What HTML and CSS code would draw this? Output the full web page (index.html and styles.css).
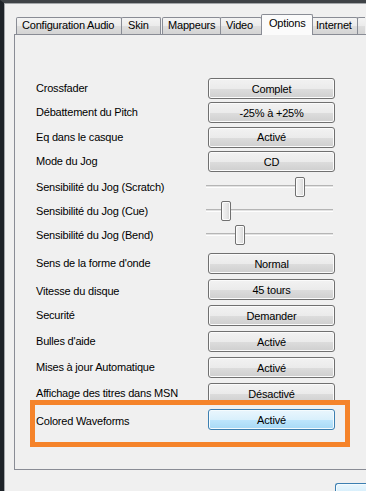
FILE: index.html
```html
<!DOCTYPE html>
<html lang="fr">
<head>
  <meta charset="UTF-8">
  <meta name="viewport" content="width=device-width, initial-scale=1.0">
  <title>Options</title>
  <link rel="stylesheet" href="styles.css">
</head>
<body>
  <div class="window">
    <div class="tabs">
      <div class="tab tab-config">Configuration Audio</div>
      <div class="tab tab-skin">Skin</div>
      <div class="tab tab-mappeurs">Mappeurs</div>
      <div class="tab tab-video">Video</div>
      <div class="tab tab-options selected">Options</div>
      <div class="tab tab-internet">Internet</div>
      <div class="tab tab-more"></div>
    </div>

    <div class="panel">
      <div class="group group-a">
        <div class="row"><span class="label">Crossfader</span><button class="btn">Complet</button></div>
        <div class="row"><span class="label">Débattement du Pitch</span><button class="btn">-25% à +25%</button></div>
        <div class="row"><span class="label">Eq dans le casque</span><button class="btn">Activé</button></div>
        <div class="row"><span class="label">Mode du Jog</span><button class="btn">CD</button></div>
      </div>

      <div class="group group-b">
        <div class="row slider-row">
          <span class="label">Sensibilité du Jog (Scratch)</span>
          <div class="slider"><div class="track"></div><div class="thumb" style="left: 89px"></div></div>
        </div>
        <div class="row slider-row">
          <span class="label">Sensibilité du Jog (Cue)</span>
          <div class="slider"><div class="track"></div><div class="thumb" style="left: 15px"></div></div>
        </div>
        <div class="row slider-row">
          <span class="label">Sensibilité du Jog (Bend)</span>
          <div class="slider"><div class="track"></div><div class="thumb" style="left: 29px"></div></div>
        </div>
      </div>

      <div class="group group-c">
        <div class="row"><span class="label">Sens de la forme d'onde</span><button class="btn">Normal</button></div>
        <div class="row"><span class="label low">Vitesse du disque</span><button class="btn">45 tours</button></div>
        <div class="row"><span class="label">Securité</span><button class="btn">Demander</button></div>
        <div class="row"><span class="label">Bulles d'aide</span><button class="btn">Activé</button></div>
        <div class="row"><span class="label">Mises à jour Automatique</span><button class="btn">Activé</button></div>
        <div class="row"><span class="label">Affichage des titres dans MSN</span><button class="btn">Désactivé</button></div>
        <div class="row"><span class="label low">Colored Waveforms</span><button class="btn hot">Activé</button></div>
      </div>

      <div class="highlight"></div>
    </div>

    <div class="footer">
      <div class="ok"></div>
    </div>
  </div>
</body>
</html>
```

FILE: styles.css
```css
html, body {
  margin: 0;
  padding: 0;
  height: 100%;
  overflow: hidden;
}
body {
  background-color: #f0f0f0;
  font-family: "Liberation Sans", Arial, sans-serif;
  font-size: 11px;
  letter-spacing: -0.2px;
  color: #000;
}
.window {
  height: 100%;
  box-sizing: border-box;
  border-top: 3px solid #3f4347;
  border-left: 4px solid #1e2328;
  box-shadow: inset 1px 1px 0 #a4a7aa;
  padding-top: 11px;
}

/* tabs */
.tabs {
  display: flex;
  align-items: flex-end;
  height: 21px;
  margin-left: 12px;
  margin-bottom: -1px;
  position: relative;
  z-index: 1;
  overflow: hidden;
}
.tab {
  flex-shrink: 0;
  box-sizing: border-box;
  height: 17px;
  margin-bottom: 1px;
  margin-left: -1px;
  padding-left: 6px;
  border: 1px solid #898c95;
  border-bottom: none;
  border-radius: 2px 2px 0 0;
  background: linear-gradient(#f4f4f4, #ebebeb 50%, #dedede 51%, #d4d4d4);
  line-height: 15px;
  white-space: nowrap;
  overflow: hidden;
}
.tab:first-child {
  margin-left: 0;
}
.tab-config { width: 106px; padding-left: 5px; }
.tab-skin { width: 40px; }
.tab-mappeurs { width: 59px; margin-left: 1px; padding-left: 5px; }
.tab-video { width: 42px; padding-left: 5px; }
.tab-options { width: 52px; }
.tab-internet { width: 47px; padding-left: 4px; }
.tab-more { width: 8px; border-right: none; border-radius: 2px 0 0 0; }
.tab.selected {
  height: 21px;
  margin-bottom: 0;
  margin-left: -1px;
  margin-right: -1px;
  position: relative;
  z-index: 2;
  padding-left: 7px;
  background: #fbfbfb;
  line-height: 17px;
}

/* panel */
.panel {
  position: relative;
  height: 436px;
  box-sizing: border-box;
  margin-left: 10px;
  border: 1px solid #898c95;
  border-right: none;
  background-color: #f0f0f0;
  padding: 43px 0 0 21px;
}
.group {
  display: flex;
  flex-direction: column;
}
.group-a {
  gap: 3.4px;
}
.group-b {
  gap: 4px;
  margin-top: 5px;
}
.group-c {
  gap: 5px;
  margin-top: 8px;
}
.row {
  display: flex;
  align-items: center;
  height: 21px;
}
.slider-row {
  height: 20px;
}
.label {
  width: 172px;
  flex-shrink: 0;
  white-space: nowrap;
  padding-bottom: 1px;
}
.label.low {
  padding-top: 3px;
  padding-bottom: 0;
}

/* buttons */
.btn {
  box-sizing: border-box;
  width: 127px;
  height: 21px;
  padding: 0;
  border: 1px solid #707070;
  border-radius: 3px;
  background: linear-gradient(#f2f2f2, #ebebeb 50%, #dddddd 51%, #cfcfcf);
  box-shadow: inset 0 0 0 1px #fbfbfb;
  font-family: inherit;
  font-size: 11px;
  letter-spacing: -0.2px;
  color: #000;
}
.btn.hot {
  border-color: #3c7fb1;
  background: linear-gradient(#eaf6fd, #d9f0fc 50%, #bee6fd 51%, #a7d9f5);
  box-shadow: inset 0 0 0 1px #f4fbfe;
}

/* sliders */
.slider {
  position: relative;
  width: 127px;
  height: 20px;
  margin-left: -2px;
}
.track {
  position: absolute;
  left: 0;
  right: 0;
  top: 8px;
  height: 1px;
  border-top: 1px solid #b5b5b5;
  border-bottom: 1px solid #fdfdfd;
  background-color: #e2e2e2;
}
.thumb {
  position: absolute;
  top: 0;
  box-sizing: border-box;
  width: 10px;
  height: 20px;
  border: 1px solid #707070;
  border-radius: 2px;
  background: linear-gradient(90deg, #f4f4f4, #e6e6e6 60%, #d6d6d6);
  box-shadow: inset 0 0 0 1px #fcfcfc;
}

/* orange annotation */
.highlight {
  position: absolute;
  left: 15px;
  top: 365px;
  width: 320px;
  height: 47px;
  box-sizing: border-box;
  border: 5px solid #f5832a;
}

.footer {
  margin-top: 13px;
  padding-left: 331px;
}
.ok {
  width: 31px;
  height: 8px;
  box-sizing: border-box;
  border: 1px solid #3c7fb1;
  border-right: none;
  border-bottom: none;
  border-radius: 3px 0 0 0;
  background: linear-gradient(#eaf6fd, #d9f0fc);
  box-shadow: inset 1px 1px 0 #f4fbfe;
}
```
